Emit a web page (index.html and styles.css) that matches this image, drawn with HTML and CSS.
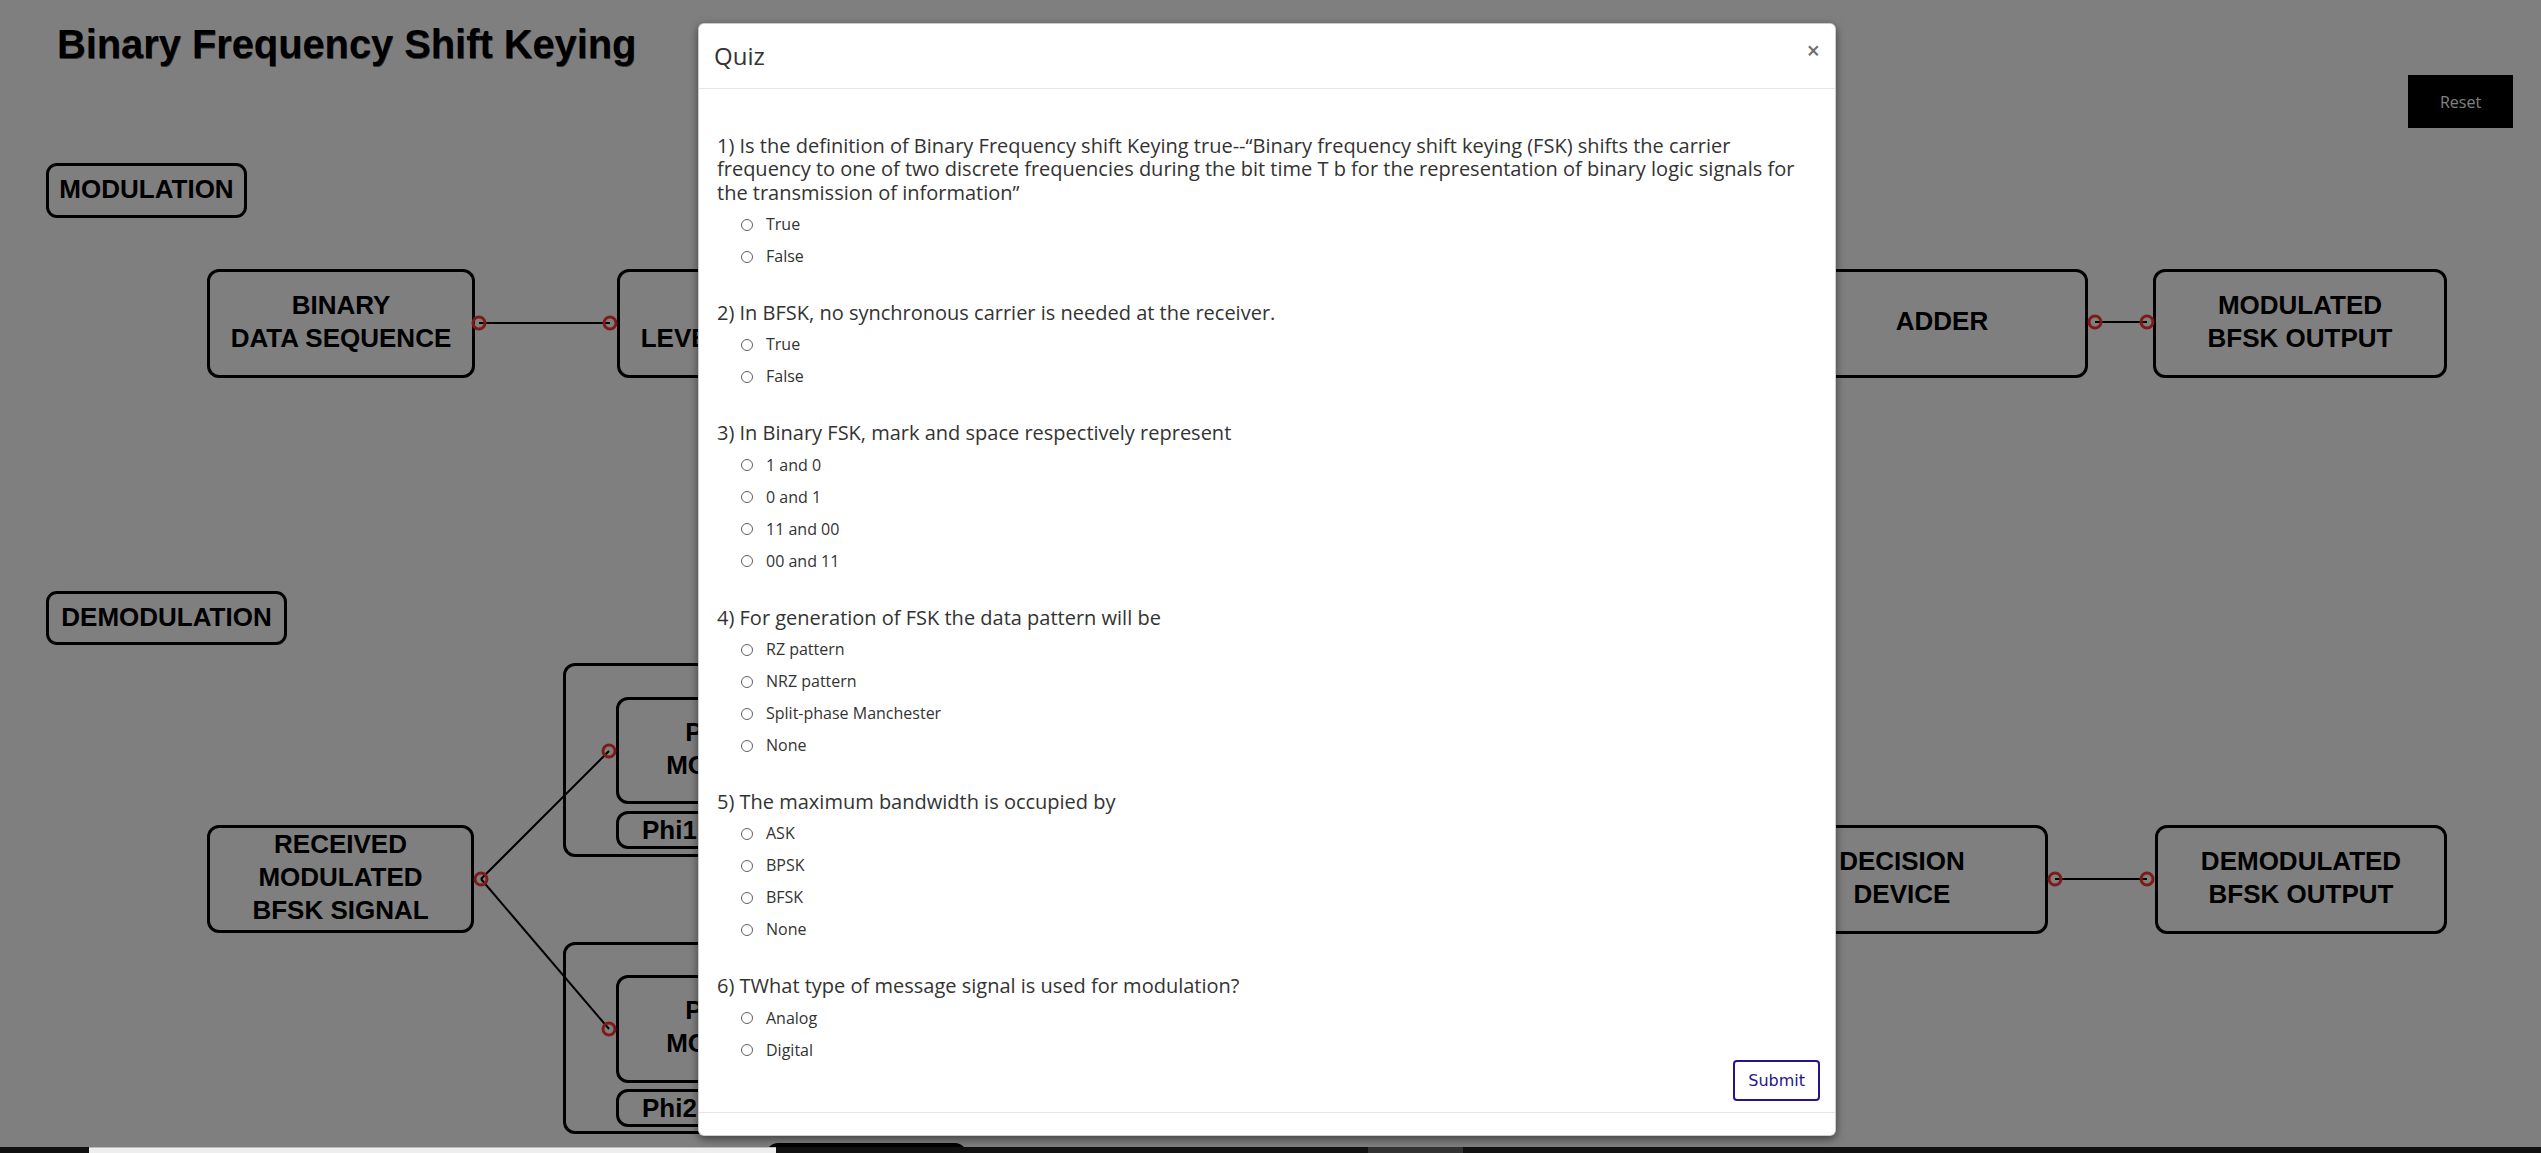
FILE: index.html
```html
<!DOCTYPE html>
<html lang="en">
<head>
<meta charset="utf-8">
<title>Binary Frequency Shift Keying</title>
<link rel="stylesheet" href="styles.css">
</head>
<body>
<div class="page">
  <main class="stage">
    <header class="topbar">
      <h1 class="title">Binary Frequency Shift Keying</h1>
      <button class="reset" type="button">Reset</button>
    </header>

    <section class="diagram">
      <div class="node label n-mod">MODULATION</div>
      <div class="node label n-demod">DEMODULATION</div>

      <div class="node n-binary">BINARY<br>DATA SEQUENCE</div>
      <div class="node n-level">ON-OFF<br>LEVEL ENCODER</div>
      <div class="node n-adder">ADDER</div>
      <div class="node n-modout">MODULATED<br>BFSK OUTPUT</div>

      <div class="node n-received">RECEIVED<br>MODULATED<br>BFSK SIGNAL</div>
      <div class="node group n-group1"></div>
      <div class="node n-prod1">PRODUCT<br>MODULATOR</div>
      <div class="node n-phi1">Phi1</div>
      <div class="node group n-group2"></div>
      <div class="node n-prod2">PRODUCT<br>MODULATOR</div>
      <div class="node n-phi2">Phi2</div>
      <div class="node n-decision">DECISION<br>DEVICE</div>
      <div class="node n-demodout">DEMODULATED<br>BFSK OUTPUT</div>
      <div class="node n-pill"></div>

      <svg class="wires" width="2541" height="1019" viewBox="0 128 2541 1019" aria-hidden="true">
        <g class="wire">
          <line x1="479" y1="323" x2="610" y2="323"/>
          <line x1="2095" y1="322" x2="2147" y2="322"/>
          <line x1="481" y1="879" x2="609" y2="751"/>
          <line x1="481" y1="879" x2="609" y2="1029"/>
          <line x1="2055" y1="879" x2="2147" y2="879"/>
        </g>
        <g class="port">
          <circle cx="479" cy="323" r="6"/>
          <circle cx="610" cy="323" r="6"/>
          <circle cx="2095" cy="322" r="6"/>
          <circle cx="2147" cy="322" r="6"/>
          <circle cx="481" cy="879" r="6"/>
          <circle cx="609" cy="751" r="6"/>
          <circle cx="609" cy="1029" r="6"/>
          <circle cx="2055" cy="879" r="6"/>
          <circle cx="2147" cy="879" r="6"/>
        </g>
      </svg>
    </section>

    <div class="backdrop"></div>

    <div class="modal" role="dialog" aria-labelledby="quiz-title">
      <div class="modal-header">
        <h4 class="modal-title" id="quiz-title">Quiz</h4>
        <button class="close" type="button" aria-label="Close">×</button>
      </div>
      <div class="modal-body">
        <div class="q">
          <p class="q-text">1) Is the definition of Binary Frequency shift Keying true--“Binary frequency shift keying (FSK) shifts the carrier frequency to one of two discrete frequencies during the bit time T b for the representation of binary logic signals for the transmission of information”</p>
          <label class="opt"><input class="radio" type="radio" name="q1"><span>True</span></label>
          <label class="opt"><input class="radio" type="radio" name="q1"><span>False</span></label>
        </div>
        <div class="q">
          <p class="q-text">2) In BFSK, no synchronous carrier is needed at the receiver.</p>
          <label class="opt"><input class="radio" type="radio" name="q2"><span>True</span></label>
          <label class="opt"><input class="radio" type="radio" name="q2"><span>False</span></label>
        </div>
        <div class="q">
          <p class="q-text">3) In Binary FSK, mark and space respectively represent</p>
          <label class="opt"><input class="radio" type="radio" name="q3"><span>1 and 0</span></label>
          <label class="opt"><input class="radio" type="radio" name="q3"><span>0 and 1</span></label>
          <label class="opt"><input class="radio" type="radio" name="q3"><span>11 and 00</span></label>
          <label class="opt"><input class="radio" type="radio" name="q3"><span>00 and 11</span></label>
        </div>
        <div class="q">
          <p class="q-text">4) For generation of FSK the data pattern will be</p>
          <label class="opt"><input class="radio" type="radio" name="q4"><span>RZ pattern</span></label>
          <label class="opt"><input class="radio" type="radio" name="q4"><span>NRZ pattern</span></label>
          <label class="opt"><input class="radio" type="radio" name="q4"><span>Split-phase Manchester</span></label>
          <label class="opt"><input class="radio" type="radio" name="q4"><span>None</span></label>
        </div>
        <div class="q">
          <p class="q-text">5) The maximum bandwidth is occupied by</p>
          <label class="opt"><input class="radio" type="radio" name="q5"><span>ASK</span></label>
          <label class="opt"><input class="radio" type="radio" name="q5"><span>BPSK</span></label>
          <label class="opt"><input class="radio" type="radio" name="q5"><span>BFSK</span></label>
          <label class="opt"><input class="radio" type="radio" name="q5"><span>None</span></label>
        </div>
        <div class="q">
          <p class="q-text">6) TWhat type of message signal is used for modulation?</p>
          <label class="opt"><input class="radio" type="radio" name="q6"><span>Analog</span></label>
          <label class="opt"><input class="radio" type="radio" name="q6"><span>Digital</span></label>
        </div>
        <div class="actions">
          <button class="submit" type="button">Submit</button>
        </div>
      </div>
      <div class="modal-footer"></div>
    </div>
  </main>

  <div class="strip">
    <div class="s1"></div>
    <div class="s2"></div>
    <div class="s3"></div>
    <div class="s4"></div>
    <div class="s5"></div>
  </div>
</div>
</body>
</html>
```

FILE: styles.css
```css
* { box-sizing: border-box; }

html, body {
  margin: 0;
  padding: 0;
}

body {
  width: 2541px;
  height: 1153px;
  overflow: hidden;
  background: #fff;
  font-family: "Liberation Sans", Arial, sans-serif;
}

.page {
  display: flex;
  flex-direction: column;
  height: 1153px;
}

.stage {
  position: relative;
  height: 1147px;
  flex: none;
  overflow: hidden;
  background: #fff;
}

/* ---------- top bar ---------- */
.topbar {
  display: flex;
  justify-content: space-between;
  align-items: flex-start;
  height: 128px;
  padding: 20px 28px 0 57px;
}

.title {
  margin: 0;
  font: 700 39.8px/48px "Liberation Sans", Arial, sans-serif;
  color: #000;
  text-shadow: 0.5px 0.5px 0 rgba(0, 0, 0, 0.6);
}

.reset {
  margin-top: 55px;
  width: 105px;
  height: 53px;
  padding: 0;
  border: 0;
  background: #000;
  color: #fff;
  font: 400 16px/20px "Open Sans", sans-serif;
}

/* ---------- diagram canvas ---------- */
.diagram {
  position: relative;
  height: 1019px;
}

.node {
  position: absolute;
  display: flex;
  align-items: center;
  justify-content: center;
  text-align: center;
  padding-bottom: 4px;
  border: 3px solid #000;
  border-radius: 12px;
  color: #000;
  font: 700 26px/33px "Liberation Sans", Arial, sans-serif;
}

.label { border-radius: 11px; padding-bottom: 2px; }

.n-mod      { left: 46px;   top: 35px;  width: 201px; height: 55px; }
.n-demod    { left: 46px;   top: 463px; width: 241px; height: 54px; }

.n-binary   { left: 207px;  top: 141px; width: 268px; height: 109px; }
.n-level    { left: 617px;  top: 141px; width: 268px; height: 109px; }
.n-adder    { left: 1796px; top: 141px; width: 292px; height: 109px; }
.n-modout   { left: 2153px; top: 141px; width: 294px; height: 109px; }

.n-received { left: 207px;  top: 697px; width: 267px; height: 108px; }
.n-group1   { left: 563px;  top: 535px; width: 620px; height: 194px; }
.n-prod1    { left: 616px;  top: 569px; width: 267px; height: 107px; }
.n-phi1     { left: 616px;  top: 683px; width: 107px; height: 38px; line-height: 30px; padding-bottom: 0; }
.n-group2   { left: 563px;  top: 814px; width: 620px; height: 192px; }
.n-prod2    { left: 616px;  top: 847px; width: 267px; height: 108px; }
.n-phi2     { left: 616px;  top: 961px; width: 107px; height: 38px; line-height: 30px; padding-bottom: 0; }
.n-decision { left: 1756px; top: 697px; width: 292px; height: 109px; }
.n-demodout { left: 2155px; top: 697px; width: 292px; height: 109px; }
.n-pill     { left: 766px;  top: 1015px; width: 201px; height: 40px; background: #000; }

.wires {
  position: absolute;
  left: 0;
  top: 0;
  overflow: visible;
}

.wire line {
  stroke: #000;
  stroke-width: 2;
}

.port circle {
  fill: none;
  stroke: #ff3434;
  stroke-width: 3;
}

/* ---------- modal ---------- */
.backdrop {
  position: absolute;
  inset: 0;
  background: rgba(0, 0, 0, 0.5);
}

.modal {
  position: absolute;
  left: 698px;
  top: 23px;
  width: 1138px;
  background: #fff;
  border: 1px solid rgba(0, 0, 0, 0.2);
  border-radius: 6px;
  box-shadow: 0 3px 9px rgba(0, 0, 0, 0.5);
  font-family: "Open Sans", sans-serif;
  color: #333;
}

.modal-header {
  display: flex;
  justify-content: space-between;
  align-items: flex-start;
  padding: 14px 15px;
  border-bottom: 1px solid #e5e5e5;
}

.modal-title {
  margin: 0;
  font-size: 24px;
  line-height: 36px;
  font-weight: 400;
  color: #333;
}

.close {
  margin-top: 1px;
  padding: 0;
  border: 0;
  background: none;
  color: #6e6e6e;
  font: 600 23px/22px "Open Sans", sans-serif;
}

.modal-body {
  padding: 16px 15px 11px;
}

.q { margin-top: 28.9px; }

.q-text {
  margin: 0 0 4px;
  padding: 0 10px 0 3px;
  font-size: 20px;
  line-height: 23.4px;
}

.opt {
  display: flex;
  align-items: center;
  height: 32px;
  padding-left: 27px;
  font-size: 16px;
  line-height: 22px;
  color: #333;
}

.radio {
  appearance: none;
  -webkit-appearance: none;
  flex: none;
  width: 12px;
  height: 12px;
  margin: 1px 13px 0 0;
  border: 1px solid #5f5f5f;
  border-radius: 50%;
  background: #fff;
}

.actions {
  display: flex;
  justify-content: flex-end;
  margin-top: -6px;
}

.submit {
  padding: 9px 13px;
  border: 2px solid #24168a;
  border-radius: 4px;
  background: #fff;
  color: #24168a;
  font: 400 16px/19px "DejaVu Sans", sans-serif;
}

.modal-footer {
  height: 23px;
  border-top: 1px solid #e5e5e5;
}

/* ---------- bottom strip ---------- */
.strip {
  display: flex;
  height: 6px;
  flex: none;
  background: #111;
}

.s1 { width: 89px;  background: #111; }
.s2 { width: 687px; background: #eee; border-top: 1px solid #bbb; }
.s3 { width: 592px; background: #111; }
.s4 { width: 95px;  background: #333; }
.s5 { flex: 1;      background: #111; }
```
